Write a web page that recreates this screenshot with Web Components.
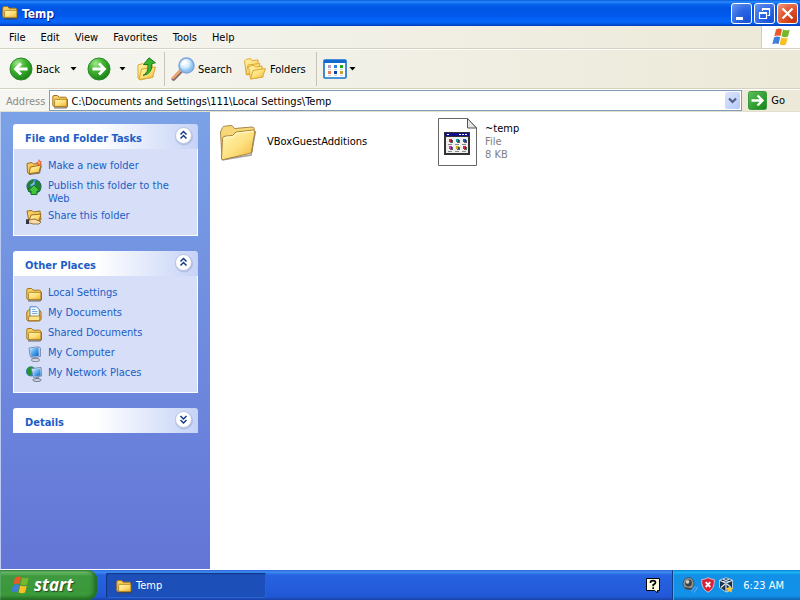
<!DOCTYPE html>
<html lang="en">
<head>
<meta charset="utf-8">
<meta name="viewport" content="width=device-width, initial-scale=1">
<title>Temp</title>
<style>
  html, body { height: 100%; margin: 0; }
  body {
    display: flex;
    flex-direction: column;
    overflow: hidden;
    background: #fff;
    color: #000;
    font-family: "DejaVu Sans Condensed", "Liberation Sans", sans-serif;
    font-size: 11px;
    line-height: 13px;
  }
  main { flex: 1; display: flex; min-height: 0; }
</style>
</head>
<body>
<xp-titlebar icon="folder">Temp</xp-titlebar>
<xp-menubar items="File,Edit,View,Favorites,Tools,Help"></xp-menubar>
<xp-toolbar></xp-toolbar>
<xp-address path="C:\Documents and Settings\111\Local Settings\Temp"></xp-address>
<main>
  <xp-sidebar>
    <xp-group heading="File and Folder Tasks" open>
      <xp-link icon="newfolder">Make a new folder</xp-link>
      <xp-link icon="publish">Publish this folder to the Web</xp-link>
      <xp-link icon="share">Share this folder</xp-link>
    </xp-group>
    <xp-group heading="Other Places" open>
      <xp-link icon="folder">Local Settings</xp-link>
      <xp-link icon="documents">My Documents</xp-link>
      <xp-link icon="folder">Shared Documents</xp-link>
      <xp-link icon="computer">My Computer</xp-link>
      <xp-link icon="network">My Network Places</xp-link>
    </xp-group>
    <xp-group heading="Details"></xp-group>
  </xp-sidebar>
  <xp-files>
    <xp-file icon="bigfolder" name="VBoxGuestAdditions"></xp-file>
    <xp-file icon="appfile" name="~temp" kind="File" size="8 KB"></xp-file>
  </xp-files>
</main>
<xp-taskbar></xp-taskbar>

<script>
const folderDefs = `<defs><linearGradient id="f" x1="0" y1="0" x2="1" y2="1"><stop offset="0" stop-color="#fff6b4"/><stop offset=".5" stop-color="#fde07a"/><stop offset="1" stop-color="#eeb63c"/></linearGradient></defs>`;
const flag = `<path d="M5 2.500Q8 .8 11 2.200L9.500 9Q6.500 7.800 3.300 9.300Z" fill="#ea5a28"/><path d="M12 2.600Q15 4 18.700 2.800L17 9.600Q13.700 10.800 10.500 9.300Z" fill="#78b62c"/><path d="M3 10.400Q6.200 8.900 9.200 10.200L7.600 17Q4.500 15.700 1.300 17.200Z" fill="#3f7fdc"/><path d="M10.200 10.500Q13.400 12 16.700 10.800L15 17.600Q11.800 18.800 8.600 17.400Z" fill="#f8c024"/>`;
const ICONS = {
  folder: [16, 16, `${folderDefs}<path d="M2 14.800H14L15.600 13V6" fill="none" stroke="#4d4430" stroke-width="1.200" opacity=".75"/><path d="M.8 4Q.8 2.500 2 2.500H5.500L7.200 4.200H13.500Q14.500 4.200 14.500 5.200V13.500H2.300Q.8 13.500.8 12Z" fill="#f6cf62" stroke="#a5751c"/><path d="M2.600 13.400V7.500Q2.600 6.300 3.800 6.300H14.900V12.400Q14.900 13.400 13.900 13.400Z" fill="url(#f)" stroke="#b07f20" stroke-width=".9"/>`],
  newfolder: [16, 16, `${folderDefs}<path d="M3 15.500L13.500 14.200L15.300 7" fill="none" stroke="#4d4430" opacity=".7"/><path d="M1 4.500L6 3.500L7.500 5L12 4.500L13 13L3 15L1.500 13.500Z" fill="#f3c95c" stroke="#a06c1e"/><path d="M3 14.500L4.500 8L15 6L13 13.500Z" fill="url(#f)" stroke="#a06c1e"/><path d="M13 0L14 2.300L16 2L14.800 4L16 6L13.700 5.500L12 7L11.800 4.700L10 3.500L12 2.800Z" fill="#f0542a"/><circle cx="13" cy="3.700" r="1.200" fill="#ffb260"/>`],
  publish: [16, 16, `<defs><radialGradient id="g" cx=".35" cy=".25"><stop offset="0" stop-color="#b8ecff"/><stop offset=".5" stop-color="#3b8ad0"/><stop offset="1" stop-color="#174b94"/></radialGradient></defs><circle cx="8" cy="7.500" r="7.500" fill="url(#g)"/><path d="M1 5Q4 0 8 .5L7 4L4 6L5 9L3 13Q0 9 1 5ZM9 2L13 2Q16.500 7 14.500 12L11 9L9 6Z" fill="#237f36"/><path d="M8 6L14 12H11V15.500H5V12H2Z" fill="#45c33a" stroke="#147320"/>`],
  share: [16, 16, `${folderDefs}<path d="M1 2L6 1.500L7.500 3L14 2L15 11L3 13Z" fill="#f6cf62" stroke="#a06c1e"/><path d="M3 12L5 6L15 5L13 12Z" fill="url(#f)" stroke="#a06c1e"/><path d="M0 11H4L8 10L11 11L15 13L13 15H7L4 14H0Z" fill="#ffdca6" stroke="#75583a" stroke-width=".8"/><path d="M0 10.500H3V15H0Z" fill="#35343c"/>`],
  documents: [16, 16, `${folderDefs}<path d="M.8 6L3 3.500H13L15 6V13.500L13.500 15H2L.8 13.700Z" fill="#f3c95c" stroke="#a06c1e"/><path d="M4 .8H10.500L13.300 3.500V11.500H4Z" fill="#f3faff" stroke="#4d83bf"/><path d="M6 3.500H9.500M6 5.500H11.500M6 7.500H11.500" stroke="#78afe2"/><path d="M2.200 14.600L3 10H14L13.600 14.600Z" fill="#fbe48c" stroke="#a06c1e" stroke-width=".8"/>`],
  computer: [16, 16, `<defs><linearGradient id="s" x1="0" y1="0" x2="1" y2="1"><stop offset="0" stop-color="#c8eeff"/><stop offset=".5" stop-color="#48a3ec"/><stop offset="1" stop-color="#1657b8"/></linearGradient></defs><path d="M3 2L12.500 .8L14.500 2V10.500L6 12L4.200 10.500Z" fill="#b9c8e4" stroke="#6d81aa" stroke-width=".8"/><path d="M3.800 2.600L12.300 1.600L12.800 9.800L5.400 10.800Z" fill="url(#s)"/><path d="M8 11.500H11.500L12 13.500H8Z" fill="#8997b1"/><ellipse cx="9.500" cy="14" rx="4.200" ry="1.700" fill="#d2d5de" stroke="#66728b" stroke-width=".8"/>`],
  network: [16, 16, `<defs><linearGradient id="s" x1="0" y1="0" x2="1" y2="1"><stop offset="0" stop-color="#d4f2ff"/><stop offset=".5" stop-color="#58adf0"/><stop offset="1" stop-color="#1657b8"/></linearGradient></defs><circle cx="5" cy="5.500" r="5" fill="#2e7bc4"/><path d="M1 3Q4-.5 7 1L5 5L6 8L3 10Q-.5 6 1 3Z" fill="#249332"/><path d="M5 2.500L15 1.500L15.600 10L7.500 11.500Z" fill="#cbd9ee" stroke="#6478a0" stroke-width=".8"/><path d="M6.200 3.400L14.200 2.700L14.700 9.500L8.300 10.400Z" fill="url(#s)"/><path d="M10 11H13V13H10Z" fill="#8794ab"/><ellipse cx="11" cy="14" rx="4.300" ry="1.500" fill="#d2d5de" stroke="#58647d" stroke-width=".8"/>`],
  back: [24, 24, `<defs><radialGradient id="b" cx=".35" cy=".25" r=".8"><stop offset="0" stop-color="#a5e88f"/><stop offset=".4" stop-color="#45b735"/><stop offset="1" stop-color="#178017"/></radialGradient></defs><circle cx="12" cy="12" r="11" fill="url(#b)" stroke="#2c8a2b"/><path d="M18.500 12H7M12 6.500L6.500 12L12 17.500" fill="none" stroke="#fff" stroke-width="2.800"/>`],
  forward: [24, 24, `<defs><radialGradient id="b" cx=".35" cy=".25" r=".8"><stop offset="0" stop-color="#a5e88f"/><stop offset=".4" stop-color="#45b735"/><stop offset="1" stop-color="#178017"/></radialGradient></defs><circle cx="12" cy="12" r="11" fill="url(#b)" stroke="#2c8a2b"/><path d="M5.500 12H17M12 6.500L17.500 12L12 17.500" fill="none" stroke="#fff" stroke-width="2.800"/>`],
  up: [24, 24, `${folderDefs}<path d="M3 8L8 6.500L9.500 8L17 7L18 20L5 23L3 21Z" fill="url(#f)" stroke="#dba82f"/><path d="M4 22.500L6.500 12L20.500 10L17.500 20.500Z" fill="url(#f)" stroke="#dba82f"/><path d="M8 18.500Q13.500 16 13 7.500H8.500L14 .8L20.500 5.800L16.700 6.600Q18 16.500 8 18.500Z" fill="#3cb531" stroke="#187c1a"/>`],
  search: [24, 24, `<defs><radialGradient id="l" cx=".4" cy=".35"><stop offset="0" stop-color="#fff"/><stop offset=".6" stop-color="#d3ecfd"/><stop offset="1" stop-color="#8fc3f0"/></radialGradient></defs><path d="M2.500 21.800L10 14" stroke="#8a6b72" stroke-width="4" stroke-linecap="round"/><path d="M2 20.800L9.500 13.500" stroke="#f3a56a" stroke-width="2.400" stroke-linecap="round"/><circle cx="15.500" cy="8.500" r="7.500" fill="url(#l)" stroke="#7fa6dc" stroke-width="1.600"/><path d="M11 8Q12 4.500 15.500 4" stroke="#fff" stroke-width="1.800" fill="none"/>`],
  folders: [24, 24, `${folderDefs}<path d="M1.500 4L3 2.500L7.500 1.500L9 3.500L15 3V16L3.500 18Z" fill="url(#f)" stroke="#dfaa35"/><path d="M3 17L5 8L17 6.500L15 15Z" fill="url(#f)" stroke="#dfaa35"/><path d="M5.500 9.500L11 8.200L12.500 10L19 9L20 20L7.500 22Z" fill="url(#f)" stroke="#dfaa35"/><path d="M7.500 22L10 13.500L22.500 11.500L19.500 20Z" fill="url(#f)" stroke="#dfaa35"/>`],
  views: [24, 20, `<rect x="1" y="1" width="22" height="18" rx="1" fill="#fff" stroke="#1471cf" stroke-width="1.600"/><path d="M1 1H23V4H1Z" fill="#1569ce"/><path d="M5 6H8V9H5Z" fill="#b29cd4"/><path d="M11 6H14V9H11Z" fill="#347fd8"/><path d="M17 6H20V9H17Z" fill="#23a028"/><path d="M5 12H8V15H5Z" fill="#ef7b52"/><path d="M11 12H14V15H11Z" fill="#123f9e"/><path d="M17 12H20V15H17Z" fill="#cda232"/><path d="M5 10.500H8M11 10.500H14M17 10.500H20M5 16.500H8M11 16.500H14M17 16.500H20" stroke="#cdd4de"/>`],
  flag: [20, 20, flag],
  go: [19, 19, `<defs><linearGradient id="o" x1="0" y1="0" x2="1" y2="1"><stop offset="0" stop-color="#5cc058"/><stop offset="1" stop-color="#118415"/></linearGradient></defs><rect x=".5" y=".5" width="18" height="18" rx="2" fill="url(#o)" stroke="#3c9a40"/><path d="M3.500 9.500H14M9.500 4.500L14.500 9.500L9.500 14.500" fill="none" stroke="#fff" stroke-width="2.400"/>`],
  bigfolder: [48, 48, `<defs><linearGradient id="f" x1="0" y1="0" x2="1" y2="1"><stop offset="0" stop-color="#fff8bc"/><stop offset=".55" stop-color="#fde07e"/><stop offset="1" stop-color="#edb33c"/></linearGradient></defs><path d="M8 42L37 37L41.500 13" fill="none" stroke="#444" stroke-width="1.600" opacity=".5"/><path d="M6.500 14L8.500 9.500Q9 8.300 10.500 8.200L17 7.500Q18.500 7.500 19.200 9L20.500 10.500L38 9Q40 9 40.200 10.500L38 34L8 41Z" fill="#f7d878" stroke="#a58848"/><path d="M7.500 41L8.500 20.500Q8.800 18.500 11 18.200L18.500 17.500L22 14L39.500 12Q41 12 40.800 14L37.500 33.500Q37.200 35 35.500 35.500L9.500 41.500Q7.500 42 7.500 41Z" fill="url(#f)" stroke="#ab8138"/><path d="M9.800 21Q10 19.500 11.500 19.300L19 18.600L22.500 15.200L39 13.200" fill="none" stroke="#fffbd8"/>`],
  appfile: [48, 48, `<path d="M6.500 .5H35.500L44.500 10V47.500H6.500Z" fill="#fff" stroke="#666"/><path d="M35.500 .5V10H44.500Z" fill="#e4e4e4" stroke="#555"/><path d="M12 14H38V37H12Z" fill="#333"/><path d="M13 15H37V18H13Z" fill="#10108c"/><path d="M14 19H36V35H14Z" fill="#efefef"/><path d="M15 16H17V17H15ZM27 16H29V17H27ZM30 16H32V17H30ZM33 16H35V17H33Z" fill="#fff"/><path d="M17 21H20V24H17Z" fill="#d32932"/><path d="M24 21H27V24H24Z" fill="#1799a4"/><path d="M31 21H34V24H31Z" fill="#2555c4"/><path d="M17 28H20V31H17Z" fill="#c737b5"/><path d="M24 28H27V31H24Z" fill="#b7b528"/><path d="M31 28H34V31H31Z" fill="#d32942"/><path d="M19 22H21V25H18V24H19ZM26 22H28V25H25V24H26ZM33 22H35V25H32V24H33ZM19 29H21V32H18V31H19ZM26 29H28V32H25V31H26ZM33 29H35V32H32V31H33Z" fill="#222" opacity=".7"/><path d="M16 26.500H20M23 26.500H27M30 26.500H34M16 33.500H20M23 33.500H27M30 33.500H34" stroke="#888"/>`],
  help: [14, 15, `<path d="M.5 .5H13.500V12.500H11.500L11.500 14.800L8.500 12.500H.5Z" fill="#ffffe1" stroke="#000"/><path d="M4.500 5V4Q4.500 2.700 7 2.700Q9.500 2.700 9.500 4.500Q9.500 5.800 7.200 6.800V8.200M7.200 9.300V11" fill="none" stroke="#000" stroke-width="1.700"/>`],
  sound: [16, 16, `<path d="M9 14Q12 12.500 13 9.500M11.500 15.500Q14.500 13.500 15.300 10" fill="none" stroke="#6db3ff" stroke-width="1"/><ellipse cx="6.500" cy="6.500" rx="5.500" ry="6" fill="#8d9494" stroke="#3f4f58"/><circle cx="6.500" cy="6" r="3.400" fill="#3c4142"/><circle cx="5.500" cy="4.800" r="1.900" fill="#c9cfcc"/><path d="M3 11L10 12" stroke="#444" stroke-width="1.600"/>`],
  shield: [16, 16, `<path d="M8 .7Q11 2.500 14.300 2.500Q15 11.500 8 15.300Q1 11.500 1.700 2.500Q5 2.500 8 .7Z" fill="#d91f36" stroke="#d3bcc8"/><path d="M5.700 5.200L10.300 10M10.300 5.200L5.700 10" stroke="#fff" stroke-width="1.900"/>`],
  vbox: [16, 16, `<path d="M8 .8L14.500 3V10.500L8 15L1.500 10.500V3Z" fill="#1b304d" stroke="#dce5ed" stroke-width=".8"/><path d="M2 3.500L8 6L14 3.500M8 6V14.500M3 10.500L7 7M13 10.500L9 7M5 2.200L11 4.700M11 2.200L5 4.700" fill="none" stroke="#dce9f5" stroke-width="1.200"/><path d="M11.500 8.500L12.700 10.800L15.500 11L13.500 12.900L14 15.500L11.500 14.200L9 15.500L9.500 12.900L7.500 11L10.300 10.800Z" fill="#ffc63a"/>`],
  min: [21, 21, `<path d="M5 14H12V17H5Z" fill="#fff"/>`],
  restore: [21, 21, `<path d="M8.500 8V5.500H15.500V12.500H13.500M8.500 6.500H15.500M5 9.500H13M5.500 9V15.500H12.500V9M5 10.500H13" fill="none" stroke="#fff" stroke-width="1.200"/>`],
  close: [21, 21, `<path d="M5.500 5.500L15.500 15.500M15.500 5.500L5.500 15.500" stroke="#fff" stroke-width="2.200"/>`],
  caret: [7, 4, `<path d="M.5 0H6.500L3.500 3.500Z" fill="#000"/>`],
  chevron: [9, 7, `<path d="M1 1.500L4.500 5L8 1.500" fill="none" stroke="#4d6185" stroke-width="2.200"/>`],
  collapse: [21, 21, `<circle cx="11" cy="11.500" r="9" fill="#8391be" opacity=".35"/><circle cx="10.500" cy="10.500" r="8" fill="#fff" stroke="#b9c4e2"/><path d="M7.500 9.500L10.500 6.500L13.500 9.500M7.500 13.500L10.500 10.500L13.500 13.500" fill="none" stroke="#153a88" stroke-width="1.500"/>`],
  expand: [21, 21, `<circle cx="11" cy="11.500" r="9" fill="#8391be" opacity=".35"/><circle cx="10.500" cy="10.500" r="8" fill="#fff" stroke="#b9c4e2"/><path d="M7.500 7L10.500 10L13.500 7M7.500 11L10.500 14L13.500 11" fill="none" stroke="#153a88" stroke-width="1.500"/>`]
};

const RESET = `<style>
  button { font: inherit; color: inherit; border: 0; background: none; padding: 0; margin: 0; cursor: default; }
  * { box-sizing: border-box; }
</style>`;

function define(name, render) {
  customElements.define(name, class extends HTMLElement {
    constructor() {
      super();
      this.attachShadow({ mode: "open" });
    }
    connectedCallback() {
      this.shadowRoot.innerHTML = RESET + render(this);
    }
  });
}

define("xp-icon", el => {
  const [w, h, body] = ICONS[el.getAttribute("name")];
  return `<style>:host{display:block;flex:none}svg{display:block}</style>
  <svg width="${w}" height="${h}" viewBox="0 0 ${w} ${h}" aria-hidden="true">${body}</svg>`;
});

define("xp-titlebar", el => `<style>
  :host { flex: none; display: flex; align-items: center; gap: 4px; height: 26px; padding: 0 2px; box-sizing: border-box;
    background: linear-gradient(#0a5be0 0, #2a8cfb 2px, #0a64ee 4px, #0055e5 8px, #0058ea 15px, #0667fb 21px, #0560f0 23px, #003bbd 26px); }
  xp-icon { padding-bottom: 2px; }
  button xp-icon { padding: 0; }
  h1 { flex: 1; margin: 0; padding-top: 1px; color: #fff; font-size: 12px; line-height: 16px; font-weight: bold; text-shadow: 1px 1px #0f1089; }
  .buttons { display: flex; gap: 2px; }
  button { border: 1px solid #fff; border-radius: 3px; width: 21px; height: 21px; display: grid; place-content: center;
    background: radial-gradient(circle at 85% 90%, #1a50d8, #2b66e4 50%, #6e97f0); }
  .close { background: radial-gradient(circle at 85% 90%, #c4340c, #e0502a 50%, #f09a80); }
</style>
<xp-icon name="${el.getAttribute("icon")}"></xp-icon>
<h1><slot></slot></h1>
<div class="buttons">
  <button aria-label="Minimize"><xp-icon name="min"></xp-icon></button>
  <button aria-label="Restore"><xp-icon name="restore"></xp-icon></button>
  <button class="close" aria-label="Close"><xp-icon name="close"></xp-icon></button>
</div>`);

define("xp-menubar", el => `<style>
  :host { flex: none; display: flex; height: 23px; box-sizing: border-box; border-bottom: 1px solid #d6d2c2;
    background: linear-gradient(90deg, #f6f6f2, #ece9d8); }
  nav { flex: 1; display: flex; align-items: center; gap: 15px; padding: 0 9px; border-right: 1px solid #d0cdbf; }
  .logo { width: 38px; display: grid; place-items: center; background: #fff; }
</style>
<nav>${el.getAttribute("items").split(",").map(t => `<button>${t}</button>`).join("")}</nav>
<div class="logo"><xp-icon name="flag"></xp-icon></div>`);

define("xp-toolbar", () => `<style>
  :host { flex: none; display: flex; align-items: center; height: 40px; padding: 0 9px; border-top: 1px solid #fff;
    border-bottom: 1px solid #d6d2c2; box-sizing: border-box;
    background: linear-gradient(90deg, #f6f6f2, #ece9d8); }
  button { display: flex; align-items: center; gap: 3px; }
  .drop { width: 27px; height: 24px; justify-content: center; }
  .next { width: 22px; }
  .tight { width: 11px; }
  i { width: 1px; height: 34px; margin: 0 6px 0 5px; background: #c8c5b6; }
  .wide { margin-left: 10px; }
  .gap { margin-left: 11px; }
  .up { margin-left: 2px; }
</style>
<button><xp-icon name="back"></xp-icon>Back</button>
<button class="drop" aria-label="Back history"><xp-icon name="caret"></xp-icon></button>
<button aria-label="Forward"><xp-icon name="forward"></xp-icon></button>
<button class="drop next" aria-label="Forward history"><xp-icon name="caret"></xp-icon></button>
<button class="up" aria-label="Up"><xp-icon name="up"></xp-icon></button>
<i></i>
<button><xp-icon name="search"></xp-icon>Search</button>
<button class="gap"><xp-icon name="folders"></xp-icon>Folders</button>
<i class="wide"></i>
<button aria-label="Views"><xp-icon name="views"></xp-icon></button>
<button class="drop tight" aria-label="Choose view"><xp-icon name="caret"></xp-icon></button>`);

define("xp-address", el => `<style>
  :host { flex: none; display: flex; align-items: center; height: 23px; padding: 0 15px 0 6px; box-sizing: border-box;
    border-top: 1px solid #fff; border-bottom: 1px solid #e2dfd0; background: linear-gradient(90deg, #f6f6f2, #ece9d8); }
  label { color: #8d8c83; margin-right: 4px; }
  label, input { padding-top: 2px; }
  .box { flex: 1; display: flex; align-items: center; height: 21px; padding: 0 1px 0 2px; background: #fff; border: 1px solid #7f9db9; }
  input { flex: 1; min-width: 0; border: 0; outline: 0; padding: 2px 0 0; margin-left: 3px; background: none; font: inherit; color: #000; }
  .drop { width: 15px; height: 17px; display: grid; place-items: center; border-radius: 2px; background: linear-gradient(135deg, #dce6fe, #b5c8f6); }
  .go { display: flex; align-items: center; gap: 4px; margin-left: 6px; }
</style>
<label for="path">Address</label>
<div class="box"><xp-icon name="folder"></xp-icon>
<input id="path" type="text" spellcheck="false" value="${el.getAttribute("path")}">
<button class="drop" aria-label="Show addresses"><xp-icon name="chevron"></xp-icon></button></div>
<button class="go"><xp-icon name="go"></xp-icon>Go</button>`);

define("xp-sidebar", () => `<style>
  :host { flex: none; display: flex; flex-direction: column; gap: 15px; width: 210px; padding: 12px 12px 0; box-sizing: border-box;
    border-left: 1px solid #b9cbf0; border-bottom: 1px solid #fff; background: linear-gradient(#7ba2e7, #6375d6); }
</style><slot></slot>`);

define("xp-group", el => {
  const open = el.hasAttribute("open");
  return `<style>
  header { display: flex; align-items: center; height: 25px; padding: 0 4px 2px 12px; border-radius: 3px 3px 0 0;
    background: linear-gradient(90deg, #fff 45%, #c6d3f7); }
  h2 { flex: 1; margin: 0; padding-top: 5px; color: #215dc6; font-size: 11px; line-height: 13px; font-weight: bold; }
  :host { display: block; }
  .body { display: flex; flex-direction: column; gap: 4px; padding: 10px 20px 10px 12px; background: #d6dff7; border: 1px solid #fff; border-top: 0; }
</style>
<header><h2>${el.getAttribute("heading")}</h2>
<button aria-label="${open ? "Collapse" : "Expand"} ${el.getAttribute("heading")}"><xp-icon name="${open ? "collapse" : "expand"}"></xp-icon></button></header>
${open ? `<div class="body"><slot></slot></div>` : ""}`;
});

define("xp-link", el => `<style>
  :host { display: block; }
  a { display: flex; gap: 6px; min-height: 16px; color: #215dc6; text-decoration: none; }
</style>
<a href="#"><xp-icon name="${el.getAttribute("icon")}"></xp-icon><span><slot></slot></span></a>`);

define("xp-files", () => `<style>
  :host { flex: 1; display: grid; grid-template-columns: repeat(auto-fill, 218px); align-content: start; padding: 6px 4px; background: #fff; }
</style><slot></slot>`);

define("xp-file", el => `<style>
  :host { display: flex; align-items: center; gap: 5px; height: 48px; }
  div { padding-bottom: 2px; }
  p { margin: 0; }
  .info { color: #808080; }
</style>
<xp-icon name="${el.getAttribute("icon")}"></xp-icon>
<div><p>${el.getAttribute("name")}</p>
${["kind", "size"].filter(k => el.hasAttribute(k)).map(k => `<p class="info">${el.getAttribute(k)}</p>`).join("")}</div>`);

define("xp-taskbar", () => `<style>
  :host { flex: none; display: flex; height: 30px;
    background: linear-gradient(#2a62d8 0, #3f8cf3 2px, #2663e0 5px, #245bdb 22px, #2157d4 27px, #1941a5 30px); }
  .start { display: flex; align-items: center; gap: 4px; width: 97px; padding: 0 0 0 10px; border-radius: 0 9px 9px 0;
    color: #fff; font: italic bold 17px/20px "Open Sans", sans-serif; text-shadow: 1px 1px 1px #234a1d;
    background: linear-gradient(#367f36 0, #6cbc6c 2px, #3f9a3f 6px, #3a983a 20px, #3c9c3a 25px, #2b762b 30px);
    box-shadow: inset -3px -1px 4px #1f6a24, inset 1px 0 #5aa868; }
  .task { display: flex; align-items: center; gap: 4px; width: 160px; height: 25px; margin: 3px 0 0 9px; padding: 0 10px; color: #fff;
    border-radius: 2px; background: #1c4fb8; box-shadow: inset 1px 1px 1px #123580, inset -1px -1px 0 #2a62cf; }
  .spacer { flex: 1; }
  .help { margin-right: 12px; }
  .tray { display: flex; align-items: center; gap: 2px; padding: 0 16px 0 9px; color: #fff; border-left: 1px solid #103c86;
    box-shadow: inset 1px 0 #2ab3f5;
    background: linear-gradient(#0c74cf 0, #19b9f3 2px, #1290e8 5px, #1291e9 22px, #1290e8 26px, #0c64b4 30px); }
  time { margin-left: 7px; }
</style>
<button class="start"><xp-icon name="flag"></xp-icon>start</button>
<button class="task"><xp-icon name="folder"></xp-icon>Temp</button>
<div class="spacer"></div>
<button class="help" aria-label="Help"><xp-icon name="help"></xp-icon></button>
<div class="tray"><xp-icon name="sound"></xp-icon><xp-icon name="shield"></xp-icon><xp-icon name="vbox"></xp-icon><time>6:23 AM</time></div>`);
</script>
</body>
</html>
